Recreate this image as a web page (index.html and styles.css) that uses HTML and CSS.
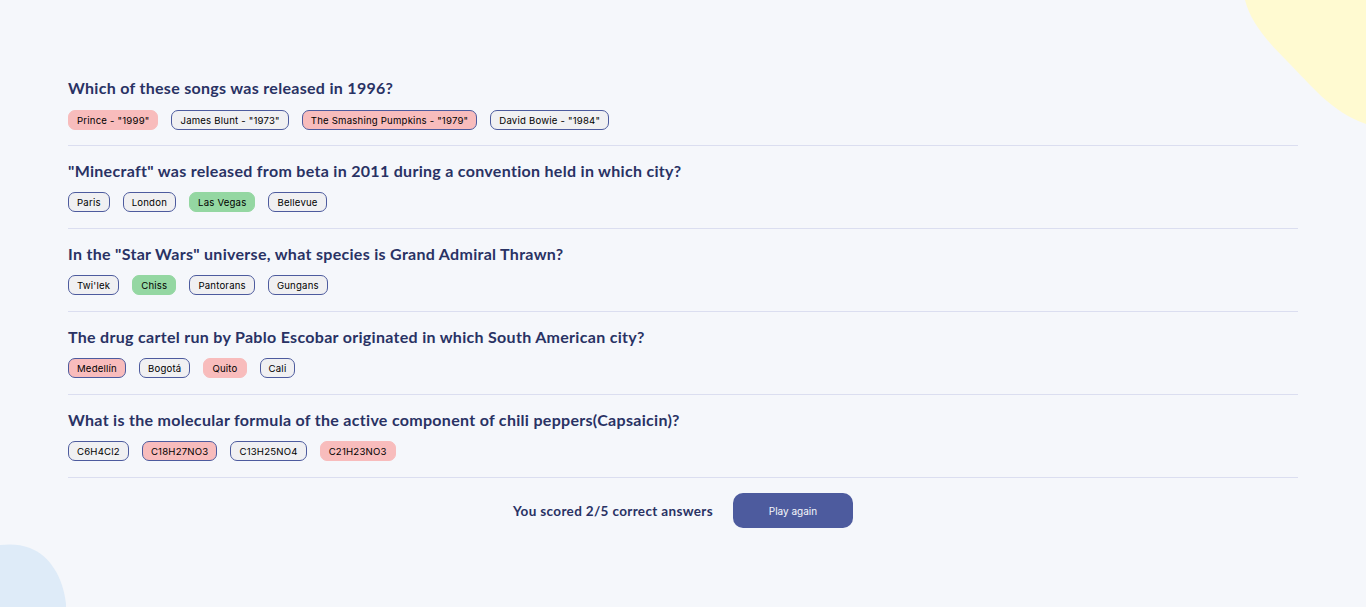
FILE: index.html
```html
<!DOCTYPE html>
<html lang="en">
<head>
<meta charset="utf-8">
<title>Quizzical</title>
<link rel="stylesheet" href="styles.css">
</head>
<body>
<svg class="blob blob-yellow" width="130" height="130" viewBox="0 0 130 130" aria-hidden="true"><path d="M9 0 C14 20 28 38 50 60 C75 85 95 112 130 124 L130 0 Z" fill="#FFFAD1"/></svg>
<svg class="blob blob-blue" width="70" height="65" viewBox="0 0 70 65" aria-hidden="true"><path d="M0 3 C10 2 20 2 30 6 C50 14 63 35 66 62 L66 65 L0 65 Z" fill="#DEEBF8"/></svg>
<main class="quiz">
  <section class="question">
    <h2 class="q-title">Which of these songs was released in 1996?</h2>
    <div class="answers">
      <span class="ans wrong">Prince - "1999"</span>
      <span class="ans">James Blunt - "1973"</span>
      <span class="ans wrong picked">The Smashing Pumpkins - "1979"</span>
      <span class="ans">David Bowie - "1984"</span>
    </div>
  </section>
  <section class="question">
    <h2 class="q-title">"Minecraft" was released from beta in 2011 during a convention held in which city?</h2>
    <div class="answers">
      <span class="ans">Paris</span>
      <span class="ans">London</span>
      <span class="ans right">Las Vegas</span>
      <span class="ans">Bellevue</span>
    </div>
  </section>
  <section class="question">
    <h2 class="q-title">In the "Star Wars" universe, what species is Grand Admiral Thrawn?</h2>
    <div class="answers">
      <span class="ans">Twi'lek</span>
      <span class="ans right">Chiss</span>
      <span class="ans">Pantorans</span>
      <span class="ans">Gungans</span>
    </div>
  </section>
  <section class="question">
    <h2 class="q-title">The drug cartel run by Pablo Escobar originated in which South American city?</h2>
    <div class="answers">
      <span class="ans wrong picked">Medellín</span>
      <span class="ans">Bogotá</span>
      <span class="ans wrong">Quito</span>
      <span class="ans">Cali</span>
    </div>
  </section>
  <section class="question">
    <h2 class="q-title">What is the molecular formula of the active component of chili peppers(Capsaicin)?</h2>
    <div class="answers">
      <span class="ans">C6H4Cl2</span>
      <span class="ans wrong picked">C18H27NO3</span>
      <span class="ans">C13H25NO4</span>
      <span class="ans wrong">C21H23NO3</span>
    </div>
  </section>
  <div class="result">
    <p class="score">You scored 2/5 correct answers</p>
    <button class="play">Play again</button>
  </div>
</main>
</body>
</html>
```
FILE: styles.css
```css
* { box-sizing: border-box; }
html, body { margin: 0; padding: 0; }
body {
  background: #F5F7FB;
  font-family: "Inter", "Noto Sans", sans-serif;
  color: #293264;
  height: 607px;
  overflow: hidden;
  position: relative;
}
.blob { position: absolute; display: block; }
.blob-yellow { top: 0; right: 0; }
.blob-blue { left: 0; bottom: 0; }
.quiz {
  position: relative;
  margin: 0 68px;
  padding-top: 78px;
}
.question {
  border-bottom: 1px solid #DBDEF0;
  padding-bottom: 16px;
  margin-bottom: 15px;
}
.question:first-child { padding-bottom: 15px; }
.question:first-child .q-title { margin-bottom: 13px; }
.q-title {
  margin: 0 0 12px;
  font-family: "Lato", "Inter", sans-serif;
  font-weight: 700;
  font-size: 16px;
  line-height: 19px;
  letter-spacing: 0.3px;
  color: #293264;
}
.answers {
  display: flex;
  gap: 13px;
}
.ans {
  display: inline-flex;
  align-items: center;
  height: 20px;
  padding: 0 8px;
  border: 1px solid #4D5B9E;
  border-radius: 7px;
  background: #F0F0F2;
  font-size: 9.6px;
  color: #000;
  letter-spacing: 0.2px;
}
.ans.wrong { background: #F8BCBC; border-color: #F8BCBC; }
.ans.wrong.picked { border-color: #4D5B9E; }
.ans.right { background: #94D7A2; border-color: #94D7A2; }
.result {
  display: flex;
  justify-content: center;
  align-items: center;
  gap: 20px;
  margin-top: 0;
}
.score {
  margin: 0;
  font-family: "Lato", "Inter", sans-serif;
  font-weight: 700;
  font-size: 13.5px;
  letter-spacing: 0.35px;
}
.play {
  width: 120px;
  height: 35px;
  border: none;
  border-radius: 10px;
  background: #4D5B9E;
  color: #F5F7FB;
  font-family: "Inter", sans-serif;
  font-size: 10px;
}
```
